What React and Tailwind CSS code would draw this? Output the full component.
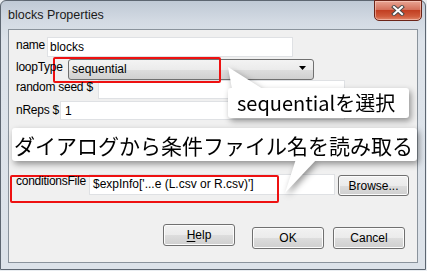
import React from 'react'

const ui = { fontFamily: '"Liberation Sans", Arial, sans-serif' }
const jp = { fontFamily: '"Noto Sans CJK JP", "Noto Sans", sans-serif' }

function Field({ className = '', children }) {
  return (
    <div className={`shrink-0 border border-[#dfe1e4] bg-white text-[12px] leading-[14px] text-black ${className}`}>
      {children}
    </div>
  )
}

function Label({ className = '', children }) {
  return <div className={`relative z-10 shrink-0 whitespace-nowrap tracking-[-0.25px] ${className}`}>{children}</div>
}

function Btn({ className = '', children }) {
  return (
    <div
      className={`flex shrink-0 items-center justify-center rounded-[3px] border border-[#707070] bg-[linear-gradient(180deg,#f2f2f2_0%,#ebebeb_50%,#dddddd_51%,#cfcfcf_100%)] text-[12px] leading-[14px] text-black shadow-[inset_0_0_0_1px_#fcfcfc] ${className}`}
    >
      {children}
    </div>
  )
}

function Callout({ box, tail, children, textCls }) {
  return (
    <div className="pointer-events-none absolute inset-0 drop-shadow-[2px_3px_3px_rgba(0,0,0,0.4)]">
      <svg className="absolute left-0 top-0" width="427" height="271">
        <polygon points={tail} fill="#ffffff" />
      </svg>
      <div className={`absolute flex items-center rounded-[3px] bg-white text-black ${box} ${textCls}`} style={jp}>
        {children}
      </div>
    </div>
  )
}

export default function App() {
  return (
    <div className="relative h-[271px] w-[427px] overflow-hidden bg-[#e9edf1]" style={ui}>
      <div className="flex h-[270px] w-[426px] flex-col rounded-t-[6px] border border-[#5d6671] bg-[linear-gradient(180deg,#bfc9d5_0px,#d3dae3_20px,#dde3ea_40px,#dce2e9_100%)]">
        {/* title bar */}
        <div className="flex h-[28px] shrink-0 items-start">
          <div className="ml-[7px] pt-[6px] text-[12.5px] leading-[16px] text-[#1b1b1b]">blocks Properties</div>
          <div className="-mt-[1px] ml-auto mr-[3px] flex h-[21px] w-[48px] items-center justify-center rounded-b-[5px] border border-[#6b2418] bg-[linear-gradient(180deg,#e8a594_0%,#d4715b_45%,#c23f22_50%,#cf5a3b_80%,#e0876b_100%)] shadow-[inset_0_0_0_1px_rgba(255,220,210,0.5)]">
            <svg width="14" height="11" viewBox="0 0 14 11">
              <path d="M3 2 L11 9 M11 2 L3 9" stroke="#4a4a4a" strokeWidth="4" strokeLinecap="square" />
              <path d="M3 2 L11 9 M11 2 L3 9" stroke="#ffffff" strokeWidth="2" strokeLinecap="square" />
            </svg>
          </div>
        </div>

        {/* client panel */}
        <div className="ml-[7px] flex h-[234px] w-[410px] flex-col border border-[#8a939c] bg-[#f0f0f0] pl-[7px] text-[12px] leading-[14px] text-black">
          <div className="mt-[7px] flex h-[20px]">
            <Label className="w-[31px] pt-[1px]">name</Label>
            <Field className="h-[20px] w-[246px] pl-[2px] pt-[2px]">blocks</Field>
          </div>

          <div className="mt-[2px] flex h-[21px]">
            <Label className="w-[52px] pt-[1px]">loopType</Label>
            <div className="flex h-[21px] w-[246px] shrink-0 items-start rounded-[3px] border border-[#707070] bg-[linear-gradient(180deg,#f3f3f3_0%,#ebebeb_50%,#dedede_51%,#d0d0d0_100%)] pl-[3px] pt-[2px]">
              <span>sequential</span>
              <svg className="ml-auto mr-[7px] mt-[4px]" width="7" height="4" viewBox="0 0 7 4">
                <polygon points="0,0 7,0 3.5,4" fill="#000" />
              </svg>
            </div>
          </div>

          <div className="flex h-[19px]">
            <Label className="w-[82px]">random seed $</Label>
            <Field className="h-[19px] w-[247px]" />
          </div>

          <div className="mt-[2px] flex h-[19px]">
            <Label className="w-[44px] pt-[2px]">nReps $</Label>
            <Field className="h-[19px] w-[285px] pl-[4px] pt-[2px] text-[#3b2a63]">1</Field>
          </div>

          <div className="mt-[54px] flex h-[22px] items-start">
            <Label className="w-[73px]">conditionsFile</Label>
            <Field className="h-[21px] w-[246px] pl-[3px] pt-[2px]">$expInfo['...e (L.csv or R.csv)']</Field>
            <Btn className="ml-[3px] mt-[1px] h-[21px] w-[71px]">Browse...</Btn>
          </div>

          <div className="mt-[28px] flex items-start pl-[147px]">
            <Btn className="h-[22px] w-[72px]">
              <span className="underline underline-offset-2">H</span>elp
            </Btn>
            <Btn className="ml-[17px] mt-[3px] h-[22px] w-[72px] border-[#3c7fb1] bg-[linear-gradient(180deg,#eaf6fd_0%,#d9f0fc_50%,#bee6fd_51%,#a7d9f5_100%)] shadow-[0_0_2px_1px_rgba(60,170,230,0.6),inset_0_0_0_1px_#cdeeff]">
              OK
            </Btn>
            <Btn className="ml-[9px] mt-[3px] h-[22px] w-[72px]">Cancel</Btn>
          </div>
        </div>
      </div>

      {/* red highlight boxes */}
      <div className="absolute left-[53px] top-[57px] h-[26px] w-[168px] rounded-[2px] border-2 border-[#ee1111]" />
      <div className="absolute left-[10px] top-[175px] h-[28px] w-[269px] rounded-[2px] border-2 border-[#ee1111]" />

      {/* callouts */}
      <Callout
        tail="228,67 232,89 263,89"
        box="left-[228px] top-[88px] h-[30px] w-[181px] pl-[9px]"
        textCls="text-[20px] leading-[24px]"
      >
        sequentialを選択
      </Callout>
      <Callout
        tail="296,159 317,159 285,193"
        box="left-[12px] top-[128px] h-[33px] w-[405px] pl-[2px]"
        textCls="text-[21px] leading-[24px] whitespace-nowrap"
      >
        ダイアログから条件ファイル名を読み取る
      </Callout>
    </div>
  )
}
